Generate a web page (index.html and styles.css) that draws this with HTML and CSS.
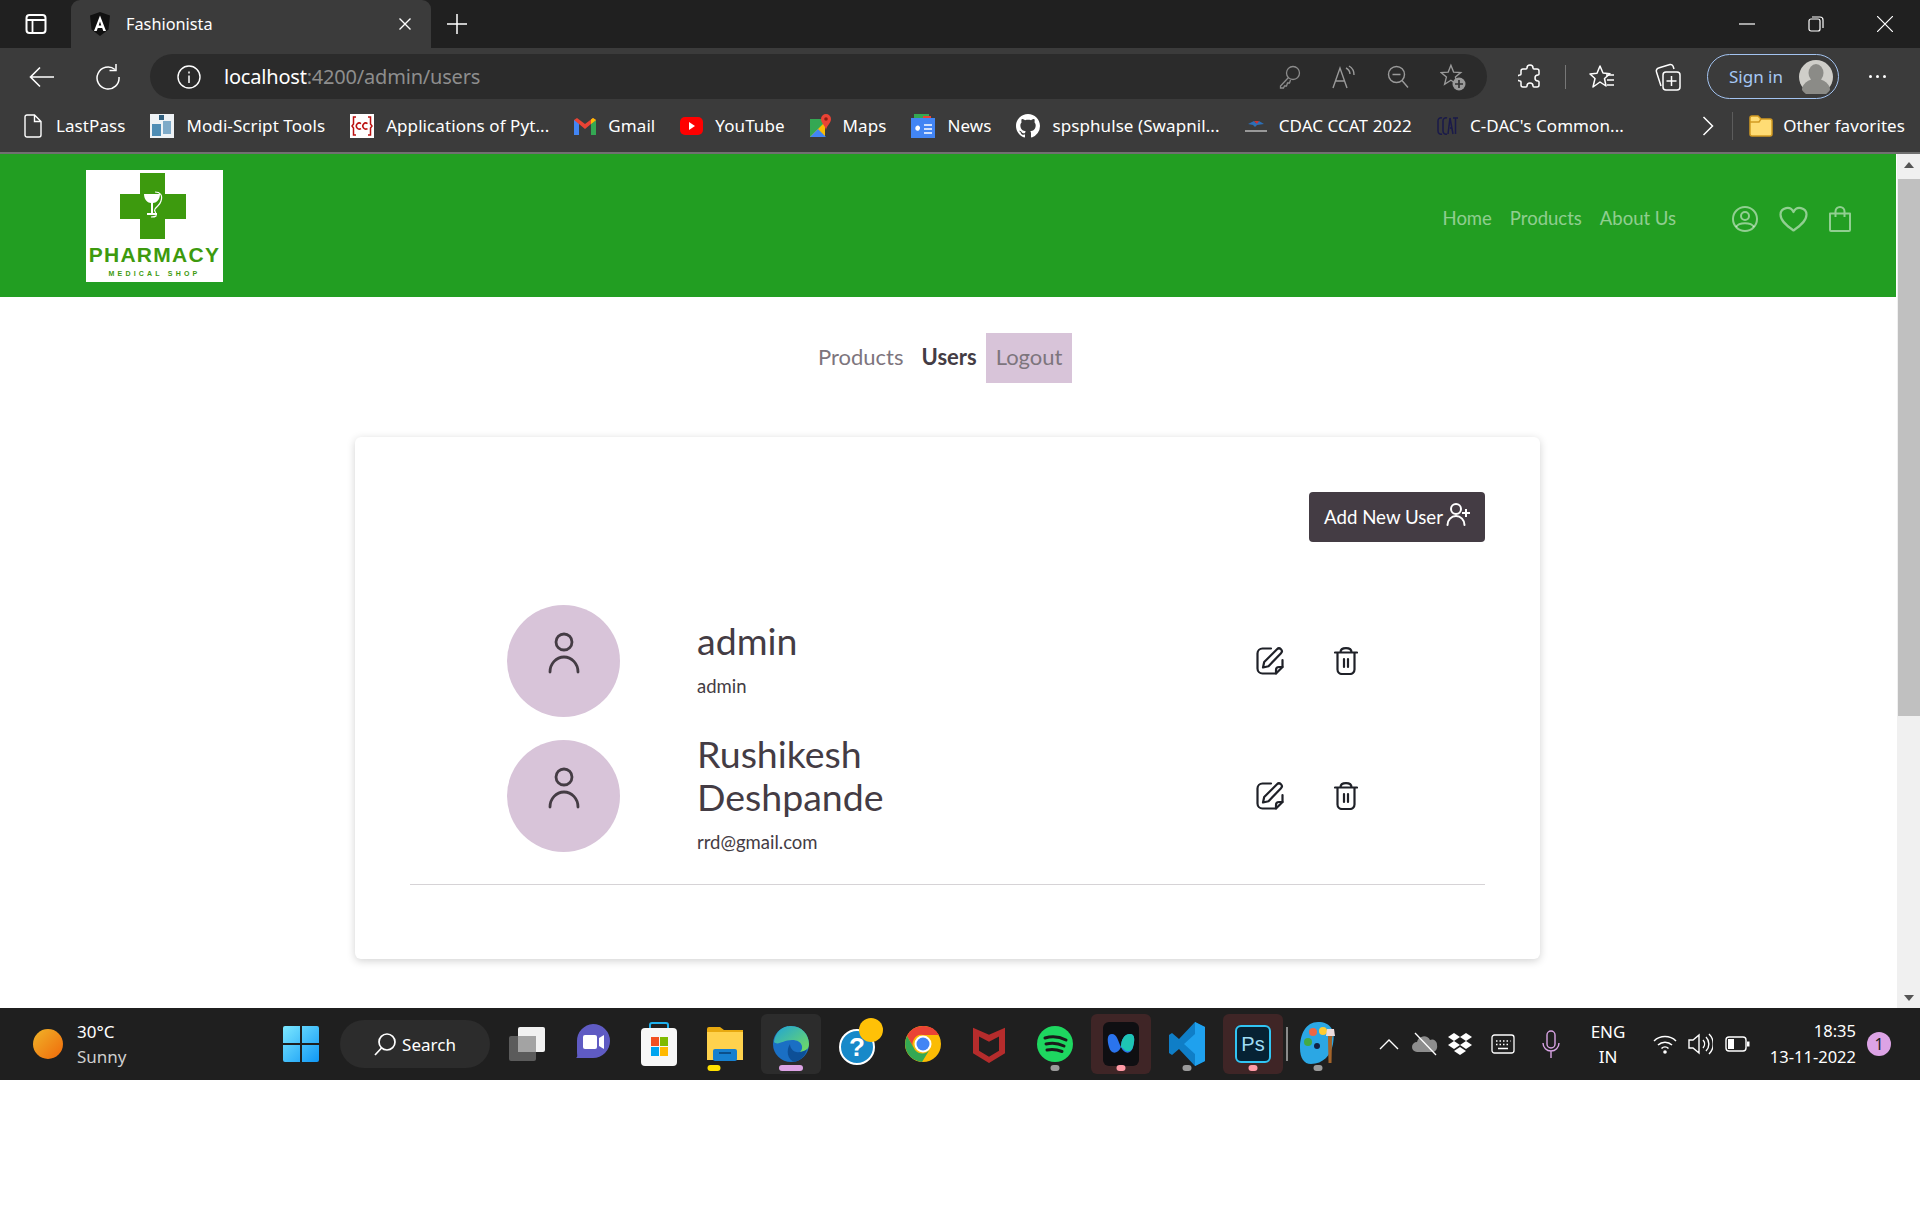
FILE: index.html
```html
<!DOCTYPE html>
<html lang="en">
<head>
<meta charset="utf-8">
<title>Fashionista</title>
<link rel="stylesheet" href="styles.css">
</head>
<body>
<svg class="sprite" width="0" height="0" aria-hidden="true">
  <symbol id="i-edit" viewBox="0 0 28 28"><path d="M15 1.500H6.500a5 5 0 0 0-5 5v15a5 5 0 0 0 5 5h13.500l6.500-6.500V13" fill="none" stroke="currentColor" stroke-width="2.200" stroke-linecap="round" stroke-linejoin="round"/><path d="M20 26.500v-3.500a3 3 0 0 1 3-3h3.500M7 20.500l1.200-5.500L21 2.300a2.700 2.700 0 0 1 4 3.900L12.500 19.200z" fill="none" stroke="currentColor" stroke-width="2.200" stroke-linecap="round" stroke-linejoin="round"/></symbol>
  <symbol id="i-trash" viewBox="0 0 24 28"><path d="M1 5.500h22M3.500 5.500v17a4.500 4.500 0 0 0 4.500 4.500h8a4.500 4.500 0 0 0 4.500-4.500v-17M6.500 5.500C6.500 3 8.500 1.200 12 1.200S17.500 3 17.500 5.500M10 12v8M14 12v8" fill="none" stroke="currentColor" stroke-width="2.200" stroke-linecap="round"/></symbol>
  <symbol id="i-person" viewBox="0 0 32 42"><circle cx="16" cy="10" r="8" fill="none" stroke="currentColor" stroke-width="2.800"/><path d="M2 40a14 15 0 0 1 28 0" fill="none" stroke="currentColor" stroke-width="2.800" stroke-linecap="round"/></symbol>
</svg>

<div class="tabbar">
  <span class="slot slot-side"><svg width="22" height="22" viewBox="0 0 22 22"><rect x="1.500" y="2" width="19" height="18" rx="3" fill="none" stroke="#fff" stroke-width="2"/><path d="M1.500 7h19M7.500 7v13" stroke="#fff" stroke-width="1.800"/></svg></span>
  <div class="tab">
    <svg width="20" height="24" viewBox="0 0 20 24"><path d="M10 0l10 3.500-1.500 14L10 24l-8.500-6.500L0 3.500z" fill="#111"/><path d="M10 3.500L4 19h2.700l1.100-3h4.400l1.100 3H16zM8.700 13.500L10 9.500l1.300 4z" fill="#fff"/></svg>
    <span class="tab-title">Fashionista</span>
    <svg class="tab-close" width="14" height="14" viewBox="0 0 14 14"><path d="M1.500 1.500l11 11M12.500 1.500l-11 11" stroke="#fff" stroke-width="1.400"/></svg>
  </div>
  <svg class="new-tab" width="22" height="22" viewBox="0 0 22 22"><path d="M11 1v20M1 11h20" stroke="#fff" stroke-width="1.500"/></svg>
  <div class="win-controls">
    <svg width="16" height="16" viewBox="0 0 16 16"><path d="M0 8h16" stroke="#fff" stroke-width="1.200"/></svg>
    <svg width="16" height="16" viewBox="0 0 16 16"><rect x="1" y="3" width="11" height="12" rx="2" fill="none" stroke="#fff" stroke-width="1.200"/><path d="M4 1h8a3 3 0 0 1 3 3v8" fill="none" stroke="#fff" stroke-width="1.200"/></svg>
    <svg width="16" height="16" viewBox="0 0 16 16"><path d="M0 0l16 16M16 0L0 16" stroke="#fff" stroke-width="1.200"/></svg>
  </div>
</div>

<div class="toolbar">
  <span class="slot slot-back"><svg width="26" height="22" viewBox="0 0 26 22"><path d="M25 11H2M11 1.500L1.500 11l9.500 9.500" fill="none" stroke="#fff" stroke-width="1.600"/></svg></span>
  <span class="slot slot-reload"><svg width="26" height="26" viewBox="0 0 26 26"><path d="M20 5.500A11 11 0 1 0 24 13" fill="none" stroke="#fff" stroke-width="1.500"/><path d="M21 0v6.500h-6.500" fill="none" stroke="#fff" stroke-width="1.500"/></svg></span>
  <div class="address">
    <svg class="info" width="24" height="24" viewBox="0 0 24 24"><circle cx="12" cy="12" r="11" fill="none" stroke="#fff" stroke-width="1.400"/><path d="M12 10.500V18M12 6.500v2" stroke="#fff" stroke-width="1.500"/></svg>
    <span class="url"><span class="url-host">localhost</span>:4200/admin/users</span>
    <span class="addr-tools">
      <svg width="22" height="24" viewBox="0 0 22 24"><circle cx="14" cy="8" r="6.500" fill="none" stroke="#8c8c8c" stroke-width="1.300"/><path d="M9.500 12.500L1.500 21v2h3l1-2h2l1-3h2l1-3" fill="none" stroke="#8c8c8c" stroke-width="1.300"/></svg>
      <svg width="24" height="24" viewBox="0 0 24 24"><path d="M1 23L8 3l7 20M3.500 16h9M14 3a7 7 0 0 1 4 6M17 1a10 10 0 0 1 5 9" fill="none" stroke="#9a9a9a" stroke-width="1.400"/></svg>
      <svg width="22" height="24" viewBox="0 0 22 24"><circle cx="9.500" cy="9.500" r="8" fill="none" stroke="#9a9a9a" stroke-width="1.400"/><path d="M5.500 9.500h8M15 15.500l6 7" stroke="#9a9a9a" stroke-width="1.400"/></svg>
      <svg width="26" height="28" viewBox="0 0 26 28"><path d="M11 1.500l3 7.500 8 .5-6 5 2 8-7-4.500L4 22.500l2-8-6-5 8-.5z" transform="translate(1 1) scale(.9)" fill="none" stroke="#9a9a9a" stroke-width="1.500"/><circle cx="19" cy="21" r="6.500" fill="#9a9a9a"/><path d="M19 17v8M15 21h8" stroke="#333" stroke-width="1.700"/></svg>
    </span>
  </div>
  <span class="slot slot-ext"><svg width="24" height="26" viewBox="0 0 24 26"><path d="M9 4a3 3 0 0 1 6 0 1 1 0 0 0 1 1h3a2 2 0 0 1 2 2v3a1 1 0 0 1-1 1 3 3 0 0 0 0 6 1 1 0 0 1 1 1v3a2 2 0 0 1-2 2h-3a1 1 0 0 1-1-1 3 3 0 0 0-6 0 1 1 0 0 1-1 1H5a2 2 0 0 1-2-2v-3a1 1 0 0 0-1-1 3 3 0 0 1 0-6 1 1 0 0 0 1-1V7a2 2 0 0 1 2-2h3a1 1 0 0 0 1-1z" fill="none" stroke="#fff" stroke-width="1.500" stroke-linejoin="round"/></svg></span>
  <span class="vsep"></span>
  <span class="slot slot-favs"><svg width="26" height="26" viewBox="0 0 26 26"><path d="M11 2l3 7 7 .7-5.500 4.800L17 22l-6-4-7 5 2-8.500L1 10l7-.7z" fill="none" stroke="#fff" stroke-width="1.500" stroke-linejoin="round"/><path d="M17 11h8M18 16h7M18 21h7" stroke="#fff" stroke-width="1.500"/></svg></span>
  <span class="slot slot-coll"><svg width="26" height="28" viewBox="0 0 26 28"><rect x="8" y="9" width="17" height="18" rx="3" fill="none" stroke="#fff" stroke-width="1.500"/><path d="M16.500 13v10M11.500 18h10M6 23L1.500 9a3 3 0 0 1 2-4L15 1.500a3 3 0 0 1 3 1.500l1 3" fill="none" stroke="#fff" stroke-width="1.500"/></svg></span>
  <div class="signin"><span>Sign in</span><span class="signin-avatar"><svg width="34" height="34" viewBox="0 0 34 34"><circle cx="17" cy="17" r="17" fill="#cfcec9"/><ellipse cx="17" cy="13" rx="7.500" ry="9" fill="#8b8b87"/><path d="M3 30a14 11 0 0 1 28 0 17 17 0 0 1-28 0z" fill="#8b8b87"/></svg></span></div>
  <span class="dots"><i></i><i></i><i></i></span>
</div>

<div class="bookmarks">
  <div class="bm bm-lastpass"><svg width="18" height="24" viewBox="0 0 18 24"><path d="M1 3a2 2 0 0 1 2-2h7.500L17 7.500V21a2 2 0 0 1-2 2H3a2 2 0 0 1-2-2zM10.500 1v6.500H17" fill="none" stroke="#fff" stroke-width="1.400"/></svg><span>LastPass</span></div>
  <div class="bm"><svg width="24" height="24" viewBox="0 0 24 24"><rect width="24" height="24" fill="#eef2f5"/><rect x="2" y="10" width="9" height="12" fill="#4e8db5"/><rect x="13" y="7" width="8" height="13" fill="#7eaac8"/><rect x="9" y="1" width="5" height="5" fill="#31607f"/></svg><span>Modi-Script Tools</span></div>
  <div class="bm"><svg width="24" height="24" viewBox="0 0 24 24"><rect width="24" height="24" fill="#fff"/><path d="M6 3H3.500v7L2 12l1.500 2v7H6M18 3h2.500v7L22 12l-1.500 2v7H18" fill="none" stroke="#b11" stroke-width="1.500"/><path d="M11 9.500a3 3 0 1 0 0 5M17.500 9.500a3 3 0 1 0 0 5" fill="none" stroke="#b11" stroke-width="1.500"/></svg><span>Applications of Pyt...</span></div>
  <div class="bm"><svg width="22" height="18" viewBox="0 0 22 18"><path d="M0 3v15h5V7l6 5 6-5v11h5V3l-3-2-8 6-8-6z" fill="#ea4335"/><path d="M0 3v15h5V7z" fill="#4285f4"/><path d="M17 7v11h5V3z" fill="#34a853"/><path d="M22 3l-3-2-2 1.500V7z" fill="#fbbc04"/></svg><span>Gmail</span></div>
  <div class="bm"><svg width="23" height="20" viewBox="0 0 23 20"><rect y="1" width="23" height="18" rx="5" fill="#f00"/><path d="M9 6l6 4-6 4z" fill="#fff"/></svg><span>YouTube</span></div>
  <div class="bm"><svg width="21" height="24" viewBox="0 0 21 24"><path d="M0 5h15v18H0z" fill="#34a853"/><path d="M0 23l15-15v15z" fill="#fbbc04"/><path d="M0 23l8-8 8 8z" fill="#4285f4"/><path d="M16 0a5 5 0 0 1 5 5c0 4-4 6-5 11-1-5-5-7-5-11a5 5 0 0 1 5-5z" fill="#ea4335"/><circle cx="16" cy="5" r="1.800" fill="#8c1c13"/></svg><span>Maps</span></div>
  <div class="bm"><svg width="24" height="24" viewBox="0 0 24 24"><path d="M3 0h15v6H3z" fill="#34a853"/><path d="M12 2h8v6h-8z" fill="#ea4335"/><path d="M0 4h24v20H0z" fill="#4285f4"/><path d="M9 13.500H6v1.500h2c-.5 1.500-3 1.500-3-.8 0-2 2-2.400 3-1.500M13 11h8M13 15h8M13 19h8" fill="none" stroke="#fff" stroke-width="1.500"/></svg><span>News</span></div>
  <div class="bm"><svg width="24" height="24" viewBox="0 0 16 16"><path fill="#fff" d="M8 0C3.580 0 0 3.580 0 8c0 3.540 2.290 6.530 5.470 7.590.4.070.55-.17.55-.38 0-.19-.01-.82-.01-1.490-2.010.37-2.530-.49-2.690-.94-.09-.23-.48-.94-.82-1.130-.28-.15-.68-.52-.01-.53.630-.01 1.080.58 1.230.82.720 1.210 1.870.87 2.330.66.070-.52.280-.87.510-1.070-1.780-.2-3.640-.89-3.640-3.950 0-.87.310-1.590.82-2.150-.08-.2-.36-1.020.08-2.120 0 0 .67-.21 2.200.82.640-.18 1.320-.27 2-.27s1.360.09 2 .27c1.530-1.040 2.200-.82 2.200-.82.440 1.100.16 1.920.08 2.120.51.560.82 1.270.82 2.150 0 3.070-1.870 3.750-3.650 3.950.29.250.54.730.54 1.480 0 1.070-.01 1.930-.01 2.200 0 .21.150.46.550.38A8.010 8.010 0 0 0 16 8c0-4.420-3.580-8-8-8z"/></svg><span>spsphulse (Swapnil...</span></div>
  <div class="bm"><svg width="22" height="14" viewBox="0 0 22 14"><path d="M3 5l6-3 2 2 3-2 5 3-7 1-2 2-2-2z" fill="#2c6fb7"/><path d="M9 2l5 0-2 3z" fill="#c33"/><path d="M0 11h22v2H0z" fill="#999"/></svg><span>CDAC CCAT 2022</span></div>
  <div class="bm"><svg width="21" height="22" viewBox="0 0 21 22"><path d="M5 3a3 3 0 0 0-4 3v10a3 3 0 0 0 4 3M10 3a3 3 0 0 0-4 3v10a3 3 0 0 0 4 3M11 19l2-16 3 16M13 13h2M16 3h5M18.500 3v16" fill="none" stroke="#1a1a4a" stroke-width="1.500"/></svg><span>C-DAC's Common...</span></div>
  <svg class="bm-more" width="12" height="20" viewBox="0 0 12 20"><path d="M1.500 1l9 9-9 9" fill="none" stroke="#fff" stroke-width="1.500"/></svg>
  <span class="bm-sep"></span>
  <div class="bm bm-other"><svg width="24" height="24" viewBox="0 0 24 24"><path d="M1 4a2 2 0 0 1 2-2h6l3 3h9a2 2 0 0 1 2 2v13a2 2 0 0 1-2 2H3a2 2 0 0 1-2-2z" fill="#ffdc74" stroke="#d29a22" stroke-width="1.500"/><path d="M1 8h9l2-3" fill="none" stroke="#d29a22" stroke-width="1.500"/></svg><span>Other favorites</span></div>
</div>

<div class="viewport">
  <main class="page">
    <header class="site-header">
      <div class="logo">
        <svg class="logo-cross" width="68" height="68" viewBox="0 0 68 68"><path d="M21 1h25v21h21v25H46v20H21V47H1V22h20z" fill="#3d9a0e"/><path d="M25 22h16c0 6-4 9-7 9v10h4v2H28v-2h4V31c-3 0-7-3-7-9z" fill="#fff"/><path d="M36 20c5 0 8 3 6 9-1 4-4 5-6 8-2 3 3 4 1 7-1 1-3 1-5 1" fill="none" stroke="#fff" stroke-width="1.200"/></svg>
        <span class="logo-name">PHARMACY</span>
        <span class="logo-sub">MEDICAL SHOP</span>
      </div>
      <nav class="site-nav">
        <a>Home</a><a>Products</a><a>About Us</a>
      </nav>
      <div class="site-icons">
        <svg width="26" height="26" viewBox="0 0 26 26"><circle cx="13" cy="13" r="12" fill="none" stroke="currentColor" stroke-width="2"/><circle cx="13" cy="10" r="4" fill="none" stroke="currentColor" stroke-width="2"/><path d="M4 21c3-5 15-5 18 0" fill="none" stroke="currentColor" stroke-width="2"/></svg>
        <svg width="29" height="26" viewBox="0 0 29 26"><path d="M14.500 24.500C8 20 1.500 15 1.500 8.500A6.800 6.800 0 0 1 14.500 6a6.800 6.800 0 0 1 13 2.500c0 6.500-6.500 11.500-13 16z" fill="none" stroke="currentColor" stroke-width="2.200" stroke-linejoin="round"/></svg>
        <svg width="22" height="26" viewBox="0 0 22 26"><path d="M1 7.500h20V24a1 1 0 0 1-1 1H2a1 1 0 0 1-1-1zM6.500 11V5.500a4.500 4.500 0 0 1 9 0V11" fill="none" stroke="currentColor" stroke-width="2" stroke-linejoin="round"/></svg>
      </div>
    </header>

    <nav class="admin-nav">
      <a>Products</a>
      <a class="is-active">Users</a>
      <a class="is-hover">Logout</a>
    </nav>

    <section class="card">
      <div class="card-actions">
        <button class="add-btn">Add New User
          <svg width="24" height="24" viewBox="0 0 24 24"><circle cx="10" cy="7" r="5" fill="none" stroke="#fff" stroke-width="2"/><path d="M1.500 23a8.500 9 0 0 1 17 0" fill="none" stroke="#fff" stroke-width="2" stroke-linecap="round"/><path d="M20 7v8M16 11h8" stroke="#fff" stroke-width="2"/></svg>
        </button>
      </div>
      <ul class="users">
        <li class="user">
          <span class="avatar"><svg width="32" height="42"><use href="#i-person"/></svg></span>
          <div class="user-info">
            <h2 class="user-name">admin</h2>
            <p class="user-mail">admin</p>
          </div>
          <div class="user-actions">
            <svg width="28" height="28"><use href="#i-edit"/></svg>
            <svg width="24" height="28"><use href="#i-trash"/></svg>
          </div>
        </li>
        <li class="user">
          <span class="avatar"><svg width="32" height="42"><use href="#i-person"/></svg></span>
          <div class="user-info">
            <h2 class="user-name">Rushikesh Deshpande</h2>
            <p class="user-mail">rrd@gmail.com</p>
          </div>
          <div class="user-actions">
            <svg width="28" height="28"><use href="#i-edit"/></svg>
            <svg width="24" height="28"><use href="#i-trash"/></svg>
          </div>
        </li>
      </ul>
      <hr class="rule">
    </section>
  </main>
  <div class="scrollbar">
    <svg class="arrow" width="10" height="6" viewBox="0 0 10 6"><path d="M5 0l5 6H0z" fill="#555"/></svg>
    <div class="thumb"></div>
    <svg class="arrow arrow-down" width="10" height="6" viewBox="0 0 10 6"><path d="M5 6L0 0h10z" fill="#555"/></svg>
  </div>
</div>

<footer class="taskbar">
  <div class="weather">
    <span class="sun"></span>
    <div class="weather-text"><span>30°C</span><span class="dim">Sunny</span></div>
  </div>
  <div class="apps">
    <span class="app"><svg width="36" height="36" viewBox="0 0 36 36"><defs><linearGradient id="win" x1="0" y1="0" x2="1" y2="1"><stop offset="0" stop-color="#7ce8ff"/><stop offset="1" stop-color="#0f97f5"/></linearGradient></defs><path d="M0 2a2 2 0 0 1 2-2h15v17H0zM19 0h15a2 2 0 0 1 2 2v15H19zM0 19h17v17H2a2 2 0 0 1-2-2zM19 19h17v15a2 2 0 0 1-2 2H19z" fill="url(#win)"/></svg></span>
    <div class="search"><svg width="22" height="24" viewBox="0 0 22 24"><circle cx="13" cy="10" r="8" fill="none" stroke="#fff" stroke-width="1.700"/><path d="M7.500 16L1 23" stroke="#fff" stroke-width="1.700"/></svg><span>Search</span></div>
    <span class="app"><svg width="36" height="34" viewBox="0 0 36 34"><rect y="9" width="27" height="25" rx="2" fill="#5b5b5b"/><rect x="9" width="27" height="25" rx="2" fill="#f1f1f1"/><rect x="9" y="9" width="18" height="16" fill="#a3a3a3"/></svg></span>
    <span class="app"><svg width="34" height="40" viewBox="0 0 34 40"><path d="M17 0a17 17 0 0 1 0 34H0c2-1 1-3 1-6V17A17 17 0 0 1 17 0z" fill="#5f5bc3"/><rect x="7" y="11" width="14" height="14" rx="2" fill="#fff"/><path d="M23 14l5-3v14l-5-3z" fill="#fff"/></svg></span>
    <span class="app"><svg width="36" height="44" viewBox="0 0 36 44"><path d="M9 8V3a2 2 0 0 1 2-2h14a2 2 0 0 1 2 2v5" fill="none" stroke="#1fb1ee" stroke-width="2"/><rect y="6" width="36" height="38" rx="4" fill="#f7f7f7"/><rect x="10" y="15" width="8" height="9" fill="#f25022"/><rect x="19" y="15" width="8" height="9" fill="#7fba00"/><rect x="10" y="25" width="8" height="9" fill="#00a4ef"/><rect x="19" y="25" width="8" height="9" fill="#ffb900"/></svg></span>
    <span class="app app-open-yellow"><svg width="36" height="34" viewBox="0 0 36 34"><path d="M0 2a2 2 0 0 1 2-2h11l4 3h19v28H0z" fill="#e8a90f"/><path d="M0 5h36v28H0z" fill="#ffd24d"/><rect x="6" y="22" width="24" height="12" rx="2" fill="#1780cf"/><rect x="12" y="25" width="12" height="2" fill="#0b4f8a"/></svg></span>
    <span class="app app-active"><svg width="36" height="44" viewBox="0 0 36 44"><defs><linearGradient id="edge" x1="0" y1="0" x2="1" y2="1"><stop offset="0" stop-color="#1fa3d8"/><stop offset="1" stop-color="#74dd5d"/></linearGradient></defs><circle cx="18" cy="22" r="18" fill="#1a6fc4"/><path d="M1 20C3 7 12 4 18 4c11 0 18 9 18 18 0 6-5 8-9 8 4-3 3-12-8-12-9 0-14 6-18 2z" fill="url(#edge)"/><path d="M17 22a8 8 0 0 0 10 8c3-.5 5-1 7-3a18 18 0 0 1-12 13c-8-2-9-12-5-18z" fill="#0d4f97"/></svg></span>
    <span class="app app-help"><svg width="44" height="54" viewBox="0 0 44 54"><circle cx="18" cy="30" r="17" fill="#1789c9" stroke="#fff" stroke-width="2"/><text x="18" y="39" class="help-mark">?</text><circle cx="32" cy="13" r="12" fill="#ffc107"/></svg></span>
    <span class="app"><svg width="36" height="36" viewBox="0 0 36 36"><circle cx="18" cy="18" r="18" fill="#fbbc04"/><path d="M18 0A18 18 0 0 0 2 10l8 14a9 9 0 0 1 8-15h16A18 18 0 0 0 18 0z" fill="#ea4335"/><path d="M2 10A18 18 0 0 0 17 36l8-13a9 9 0 0 1-15 1z" fill="#34a853"/><circle cx="18" cy="18" r="8.500" fill="#fff"/><circle cx="18" cy="18" r="6.500" fill="#4285f4"/></svg></span>
    <span class="app"><svg width="32" height="37" viewBox="0 0 32 42" preserveAspectRatio="none"><path d="M0 2l16 8 16-8v29l-16 11L0 31zM6 12v16l10 7 10-7V12l-10 6z" fill="#b52c2c" fill-rule="evenodd"/></svg></span>
    <span class="app app-dot"><svg width="36" height="36" viewBox="0 0 36 36"><circle cx="18" cy="18" r="18" fill="#1ed760"/><path d="M8 12c7-2 14-1.500 21 2M9 18c6-1.500 12-1 18 2M10 24c5-1 10-.5 15 1.500" fill="none" stroke="#1a1a1a" stroke-width="3" stroke-linecap="round"/></svg></span>
    <span class="app app-red"><svg width="36" height="44" viewBox="0 0 36 44"><rect width="36" height="44" rx="6" fill="#0f0f12"/><path d="M9 12c-5 0-5 6-3 13 2 8 9 7 12 0 3 7 10 8 12 0 2-7 2-13-3-13-6 0-9 6-9 13-3-6-4-13-9-13z" fill="#2a74ee"/><path d="M18 25c0-7 3-13 9-13 5 0 5 6 3 13-1 4-4 5-7 4z" fill="#1ec5b4"/></svg></span>
    <span class="app app-dot"><svg width="36" height="44" viewBox="0 0 36 44"><path d="M26 0l10 5v34l-10 5L10 27 3 33l-3-2V13l3-2 7 6z" fill="#0f7ec7"/><path d="M26 0l10 5v34l-10 5zM26 12L15 22l11 10z" fill="#1fa1ee"/></svg></span>
    <span class="app app-red"><svg width="36" height="38" viewBox="0 0 36 38"><rect x="1" y="1" width="34" height="36" rx="5" fill="#062234" stroke="#31c5f4" stroke-width="2"/><text x="18" y="26" class="ps-mark">Ps</text></svg></span>
    <span class="task-sep"></span>
    <span class="app app-dot app-paint"><svg width="36" height="44" viewBox="0 0 36 44"><path d="M18 0C30 0 36 8 33 22c-2 11-10 20-22 20C4 42 0 36 0 26 0 12 6 0 18 0z" fill="#2ba7e4"/><circle cx="13" cy="10" r="4" fill="#e64" /><circle cx="23" cy="9" r="4" fill="#fc3"/><circle cx="8" cy="20" r="4" fill="#4a4"/><circle cx="17" cy="24" r="3" fill="#124"/><path d="M28 12h5l-1 5-.5 24h-3L28 17z" fill="#a4642a"/><path d="M27 7h7l1 7h-9z" fill="#edd"/></svg></span>
  </div>
  <div class="tray">
    <svg class="t-chev" width="20" height="12" viewBox="0 0 20 12"><path d="M1 11l9-9 9 9" fill="none" stroke="#fff" stroke-width="1.400"/></svg>
    <svg class="t-cloud" width="26" height="24" viewBox="0 0 26 24"><path d="M5 20a5 5 0 0 1 0-10 7 7 0 0 1 13-2 5 5 0 0 1 7 5c1 4-2 7-4 7z" fill="#8d8d8d"/><path d="M3 1l21 22" stroke="#fff" stroke-width="1.300"/></svg>
    <svg class="t-drop" width="24" height="24" viewBox="0 0 24 24"><path d="M6 1l6 4-6 4-6-4zM18 1l6 4-6 4-6-4zM6 9l6 4-6 4-6-4zM18 9l6 4-6 4-6-4zM12 15l6 4-6 4-6-4z" fill="#fff"/></svg>
    <svg class="t-key" width="24" height="20" viewBox="0 0 24 20"><rect x="1" y="1" width="22" height="18" rx="2.500" fill="none" stroke="#fff" stroke-width="1.300"/><path d="M5 7h1.500M8.500 7H10M12 7h1.500M15.500 7H17M19 7h.5M5 10.500h1.500M8.500 10.500H10M12 10.500h1.500M15.500 10.500H17M7 14.500h10" stroke="#fff" stroke-width="1.400"/></svg>
    <svg class="t-mic" width="18" height="28" viewBox="0 0 18 28"><rect x="5" y="1" width="8" height="17" rx="4" fill="none" stroke="#d9a4e5" stroke-width="1.400"/><path d="M1 13a8 8 0 0 0 16 0M9 21v7" fill="none" stroke="#d9a4e5" stroke-width="1.400"/></svg>
    <div class="lang"><span>ENG</span><span>IN</span></div>
    <svg class="t-wifi" width="24" height="20" viewBox="0 0 24 20"><path d="M1 7a16 16 0 0 1 22 0M5 11a10 10 0 0 1 14 0M8.500 14.500a5 5 0 0 1 7 0" fill="none" stroke="#fff" stroke-width="1.500"/><circle cx="12" cy="18" r="1.800" fill="#fff"/></svg>
    <svg class="t-vol" width="25" height="24" viewBox="0 0 25 24"><path d="M1 8h4l6-5v18l-6-5H1zM15 8a6 6 0 0 1 0 8M18 5a10 10 0 0 1 0 14M21 2a14 14 0 0 1 0 20" fill="none" stroke="#fff" stroke-width="1.400"/></svg>
    <svg class="t-bat" width="25" height="16" viewBox="0 0 25 16"><rect x="1" y="1" width="20" height="14" rx="3" fill="none" stroke="#fff" stroke-width="1.400"/><rect x="3" y="3" width="6" height="10" fill="#fff"/><rect x="22" y="5.500" width="2.500" height="5" fill="#fff"/></svg>
    <div class="clock"><span>18:35</span><span>13-11-2022</span></div>
    <span class="badge">1</span>
  </div>
</footer>
<div class="blank"></div>
</body>
</html>
```

FILE: styles.css
```css
* { box-sizing: border-box; }
html, body { margin: 0; padding: 0; }
body { width: 1920px; height: 1214px; overflow: hidden; background: #fff; font-family: "Noto Sans", "Open Sans", sans-serif; color: #fff; }
.sprite { position: absolute; }
svg { display: block; flex: none; }

/* browser tab strip */
.tabbar { height: 48px; background: #202020; display: flex; align-items: center; }
.slot { display: flex; align-items: center; justify-content: center; flex: none; }
.slot-side { width: 71px; }
.tab { width: 360px; height: 48px; padding: 0 19px; background: #3b3b3b; border-radius: 9px 9px 0 0; display: flex; align-items: center; }
.tab-title { margin-left: 16px; font-size: 16.300px; flex: 1; }
.new-tab { margin-left: 15px; }
.win-controls { margin-left: auto; padding-right: 27px; display: flex; gap: 53px; }

/* address row */
.toolbar { height: 51px; padding-top: 6px; background: #3b3b3b; display: flex; align-items: center; }
.slot-back { width: 84px; }
.slot-reload { width: 48px; margin-right: 18px; }
.address { width: 1337px; height: 45px; border-radius: 23px; background: #2b2b2b; display: flex; align-items: center; padding-left: 27px; }
.info { margin-right: 23px; }
.url { font-size: 20px; color: #8e8e8e; letter-spacing: -.2px; }
.url-host { color: #fff; }
.addr-tools { margin-left: auto; padding-right: 21px; display: flex; align-items: center; gap: 31px; }
.slot-ext { width: 24px; margin-left: 31px; }
.vsep { width: 1px; height: 24px; background: #777; margin-left: 23px; }
.slot-favs { width: 26px; margin-left: 23px; }
.slot-coll { width: 26px; margin-left: 40px; }
.signin { margin-left: 26px; width: 132px; height: 45px; border: 1.500px solid #a3c3f0; border-radius: 23px; display: flex; align-items: center; justify-content: space-between; padding: 0 5px 0 21px; font-size: 17px; color: #a6c8f5; }
.dots { margin-left: 30px; display: flex; gap: 4px; }
.dots i { width: 3px; height: 3px; border-radius: 50%; background: #fff; }

/* favourites row */
.bookmarks { height: 55px; background: #3b3b3b; border-bottom: 2px solid #707070; display: flex; align-items: center; padding: 0 15px 0 24px; font-size: 17px; letter-spacing: .08px; gap: 25px; }
.bm { display: flex; align-items: center; gap: 12px; white-space: nowrap; }
.bm-lastpass { gap: 14px; }
.bm-more { margin-left: auto; }
.bm-sep { width: 1px; height: 28px; background: #5c5c5c; margin-left: -7px; }
.bm-other { margin-left: -9px; gap: 10px; }

/* page */
.viewport { height: 854px; display: flex; overflow: hidden; }
.page { width: 1896px; flex: none; color: #443c44; font-family: Lato, "Noto Sans", sans-serif; }
.scrollbar { width: 24px; flex: none; background: #f0f0f0; border-left: 1px solid #fff; display: flex; flex-direction: column; align-items: center; padding-top: 8px; }
.arrow { flex: none; }
.thumb { width: 22px; height: 537px; margin-top: 11px; background: #c0c0c0; }
.arrow-down { margin-top: auto; margin-bottom: 7px; }

.site-header { height: 143px; background: #229e22; padding: 16px 45px 0 86px; display: flex; align-items: flex-start; color: rgba(255,255,255,.5); }
.logo { width: 137px; height: 112px; background: #fff; display: flex; flex-direction: column; align-items: center; padding: 2px 3px 0 0; color: #3d9a0e; }
.logo-name { margin: 3px -3px 0 0; font-family: "Liberation Sans", sans-serif; font-size: 21px; line-height: 24px; font-weight: 700; letter-spacing: 1.300px; white-space: nowrap; }
.logo-sub { margin: 2px -3px 0 0; font-family: "Liberation Sans", sans-serif; font-size: 7px; line-height: 10px; font-weight: 700; letter-spacing: 3.200px; white-space: nowrap; }
.site-nav { margin-left: auto; margin-top: 36px; display: flex; gap: 18px; font-size: 18.500px; line-height: 24px; }
.site-icons { margin-left: 56px; margin-top: 36px; display: flex; gap: 21px; align-items: center; }

.admin-nav { margin-top: 36px; padding-left: 809px; display: flex; height: 50px; align-items: center; font-size: 22px; color: #7d757d; }
.admin-nav a { padding: 0 9px; height: 50px; line-height: 48px; }
.admin-nav .is-active { color: #443c44; font-weight: 700; }
.admin-nav .is-hover { background: #d8c4d9; padding: 0 10px; }

.card { width: 1185px; height: 522px; margin: 54px 0 0 355px; background: #fff; border-radius: 6px; box-shadow: 0 2px 8px rgba(0,0,0,.18); padding: 55px 55px 0; }
.card-actions { display: flex; justify-content: flex-end; }
.add-btn { width: 176px; height: 50px; background: #443c44; color: #fff; border: 0; border-radius: 4px; font: 400 18.700px Lato, sans-serif; display: flex; align-items: center; justify-content: center; gap: 3px; padding: 0; }
.add-btn svg { margin-top: -7px; }
.users { list-style: none; margin: 63px 0 0; padding: 0 0 0 97px; display: flex; flex-direction: column; gap: 23px; }
.user { height: 112px; display: flex; align-items: center; }
.avatar { width: 113px; height: 112px; padding-bottom: 16px; border-radius: 50%; background: #d8c4d9; display: flex; align-items: center; justify-content: center; color: #443c44; }
.user-info { width: 559px; margin-left: 77px; padding-bottom: 6px; }
.user-name { margin: 0 0 12px; width: 240px; font-size: 37.500px; line-height: 43px; font-weight: 400; color: #443c44; }
.user-mail { margin: 0; font-size: 18.500px; line-height: 24px; color: #443c44; }
.user-actions { display: flex; align-items: center; gap: 50px; color: #1f2128; }
.rule { margin: 32px 0 0; border: 0; border-top: 1px solid #d6d3d6; }

/* taskbar */
.taskbar { height: 72px; background: #1f1f1f; display: flex; align-items: center; }
.weather { width: 282px; padding-left: 33px; display: flex; align-items: center; gap: 14px; flex: none; }
.sun { width: 30px; height: 30px; border-radius: 50%; background: linear-gradient(135deg, #f0b429, #f0690a); }
.weather-text { display: flex; flex-direction: column; font-size: 17px; line-height: 25px; }
.dim { color: #cfcfcf; }
.apps { display: flex; align-items: center; flex: none; }
.app { width: 66px; height: 60px; display: flex; align-items: center; justify-content: center; position: relative; border-radius: 6px; }
.apps > .app:first-child { width: 38px; }
.app-help svg { margin-left: 8px; }
.app-paint { margin-left: -4px; }
.search { width: 150px; height: 48px; margin: 0 4px 0 20px; border-radius: 24px; background: #2c2c2c; display: flex; align-items: center; justify-content: center; gap: 6px; font-size: 17px; }
.app-active { background: #2c2c2c; width: 60px; margin: 0 3px; }
.app-active::after, .app-red::after, .app-dot::after, .app-open-yellow::after { content: ""; position: absolute; bottom: 3px; left: 50%; transform: translateX(-50%); height: 6px; border-radius: 3px; width: 9px; background: #9a9a9a; }
.app-active::after { width: 24px; background: #dca3e5; }
.app-red { background: #3f2526; width: 60px; margin: 0 3px; }
.app-red::after { background: #ff9aa6; }
.app-open-yellow::after { width: 13px; background: #ffe100; margin-left: -11px; }
.task-sep { width: 2px; height: 34px; background: #8a8a8a; margin: 0 1px 0 0; }
.help-mark { font: 700 26px "Liberation Sans", sans-serif; fill: #fff; text-anchor: middle; }
.ps-mark { font: 400 20px "Liberation Sans", sans-serif; fill: #9fdcf5; text-anchor: middle; }

.tray { flex: 1; display: flex; align-items: center; padding-left: 28px; font-size: 17px; }
.t-cloud { margin-left: 13px; }
.t-drop { margin-left: 10px; }
.t-key { margin-left: 19px; }
.t-mic { margin-left: 27px; }
.lang { width: 60px; margin-left: 18px; display: flex; flex-direction: column; align-items: center; line-height: 25px; }
.t-wifi { margin-left: 15px; }
.t-vol { margin-left: 11px; }
.t-bat { margin-left: 12px; }
.clock { margin-left: auto; display: flex; flex-direction: column; align-items: flex-end; line-height: 26px; font-size: 16.500px; }
.badge { width: 24px; height: 24px; border-radius: 50%; background: #dca3e5; color: #222; margin: 0 29px 0 11px; display: flex; align-items: center; justify-content: center; font-size: 16px; }
.blank { height: 134px; background: #fff; }
```
